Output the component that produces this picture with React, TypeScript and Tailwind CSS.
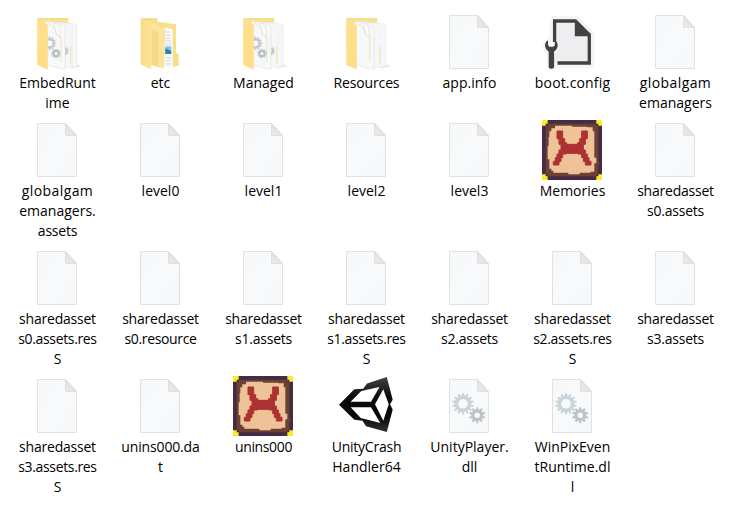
type Kind = "gearFolder" | "pageFolder" | "docFolder" | "file" | "config" | "game" | "unity" | "dll";

interface Item {
  kind: Kind;
  lines: string[];
}

const rows: { height: string; items: Item[] }[] = [
  {
    height: "h-[108px]",
    items: [
      { kind: "gearFolder", lines: ["EmbedRunt", "ime"] },
      { kind: "docFolder", lines: ["etc"] },
      { kind: "gearFolder", lines: ["Managed"] },
      { kind: "pageFolder", lines: ["Resources"] },
      { kind: "file", lines: ["app.info"] },
      { kind: "config", lines: ["boot.config"] },
      { kind: "file", lines: ["globalgam", "emanagers"] },
    ],
  },
  {
    height: "h-32",
    items: [
      { kind: "file", lines: ["globalgam", "emanagers.", "assets"] },
      { kind: "file", lines: ["level0"] },
      { kind: "file", lines: ["level1"] },
      { kind: "file", lines: ["level2"] },
      { kind: "file", lines: ["level3"] },
      { kind: "game", lines: ["Memories"] },
      { kind: "file", lines: ["sharedasset", "s0.assets"] },
    ],
  },
  {
    height: "h-32",
    items: [
      { kind: "file", lines: ["sharedasset", "s0.assets.res", "S"] },
      { kind: "file", lines: ["sharedasset", "s0.resource"] },
      { kind: "file", lines: ["sharedasset", "s1.assets"] },
      { kind: "file", lines: ["sharedasset", "s1.assets.res", "S"] },
      { kind: "file", lines: ["sharedasset", "s2.assets"] },
      { kind: "file", lines: ["sharedasset", "s2.assets.res", "S"] },
      { kind: "file", lines: ["sharedasset", "s3.assets"] },
    ],
  },
  {
    height: "h-32",
    items: [
      { kind: "file", lines: ["sharedasset", "s3.assets.res", "S"] },
      { kind: "file", lines: ["unins000.da", "t"] },
      { kind: "game", lines: ["unins000"] },
      { kind: "unity", lines: ["UnityCrash", "Handler64"] },
      { kind: "dll", lines: ["UnityPlayer.", "dll"] },
      { kind: "dll", lines: ["WinPixEven", "tRuntime.dl", "l"] },
    ],
  },
];

// Letter spacing for the label lines that need to run tighter or wider.
function tracking(line: string) {
  if (line === "globalgam") return "tracking-[0.4px]";
  if (line === "boot.config") return "tracking-[0.15px]";
  if (line === "s0.resource" || line.endsWith("assets.res")) return "tracking-[-0.35px]";
  if (line === "unins000") return "tracking-[-0.35px]";
  if (line.endsWith("assets") || line === "sharedasset" || line === "UnityCrash") return "tracking-[-0.22px]";
  if (line === "unins000.da" || line === "Resources") return "tracking-[-0.15px]";
  return "";
}

function gearPath(cx: number, cy: number, outer: number, root: number, hole: number, teeth: number) {
  const pts: string[] = [];
  const step = (Math.PI * 2) / teeth;
  for (let i = 0; i < teeth; i++) {
    const a = i * step - Math.PI / 2;
    const corners: [number, number][] = [
      [-0.3, root],
      [-0.2, outer],
      [0.2, outer],
      [0.3, root],
    ];
    for (const [t, r] of corners) {
      pts.push(`${(cx + r * Math.cos(a + t * step)).toFixed(2)} ${(cy + r * Math.sin(a + t * step)).toFixed(2)}`);
    }
  }
  return `M${pts.join("L")}ZM${cx - hole} ${cy}a${hole} ${hole} 0 1 0 ${hole * 2} 0a${hole} ${hole} 0 1 0 ${-hole * 2} 0Z`;
}

function FileIcon({ gears = false }: { gears?: boolean }) {
  return (
    <svg viewBox="0 0 60 60" className="h-[60px] w-[60px]">
      <path d="M10.5 3.5H38.5L49.5 15.5V56.5H10.5Z" fill="url(#paper)" stroke="#dfe1e2" />
      <path d="M38.5 3.5V15.5H49.5Z" fill="url(#fold)" stroke="#d9dbdc" strokeWidth=".8" />
      {gears && (
        <>
          <path d={gearPath(24, 27.8, 10.7, 8.4, 4.8, 14)} fill="#cbd4da" fillRule="evenodd" />
          <path d={gearPath(38.2, 39.2, 8.1, 6, 2.7, 10)} fill="#bac4ca" fillRule="evenodd" />
        </>
      )}
    </svg>
  );
}

function FolderIcon({ gears = false }: { gears?: boolean }) {
  return (
    <svg viewBox="0 0 60 60" className="h-[60px] w-[60px]">
      <path d="M43 57L54.5 54.2L50 52Z" fill="#e8e8e8" />
      <path d="M10.5 6.2H41.3V50H10.5Z" fill="#f9e294" />
      <path d="M10.5 6.2H41.3V7.5H13Z" fill="#f5da84" />
      <path d="M26 9.7L38 11L49.8 12.3V54.5L34 56Z" fill="#f6f7f8" stroke="#e4e5e6" strokeWidth=".6" />
      <path d="M40 11.2L45 16V54" fill="none" stroke="#e9eaeb" strokeWidth=".5" />
      <path d="M43.7 34V51" stroke="#f5dea2" strokeWidth="1" />
      {gears && <path d={gearPath(37.5, 39, 4.6, 3.4, 1.3, 9)} fill="#bcc5cb" fillRule="evenodd" />}
      <path d="M18.5 9.2L31 11.2L38 14.5V57.6L20 53Z" fill="#f7f8fa" stroke="#e0e1e2" strokeWidth=".6" />
      <path d="M29.5 11L33.7 25L29 22.5Z" fill="#e5e6e7" />
      <path d="M27 11L32 13L33.8 25.5L29.5 22.5Z" fill="#fbfbfb" stroke="#d5d6d7" strokeWidth=".5" />
      <path d="M21 11.5Q28 13 29.5 22.5L33.8 25.4V50" fill="none" stroke="#f1dda5" strokeWidth=".8" />
      {gears && (
        <>
          <path d={gearPath(22.5, 31.3, 6.8, 5.4, 2.9, 12)} fill="#c3cbd1" fillRule="evenodd" />
          <path d={gearPath(29, 41.5, 4.9, 3.7, 1.6, 10)} fill="#b5bfc5" fillRule="evenodd" />
        </>
      )}
      <path d="M10.3 6.3L20.8 13V57.4L10.3 53Z" fill="url(#folder)" />
    </svg>
  );
}

function DocFolderIcon() {
  return (
    <svg viewBox="0 0 60 60" className="h-[60px] w-[60px]">
      <path d="M10.7 6.3H27.3V9.7L46 12.2V40.7L48.7 42V53.5L42 55.5L20 52Z" fill="#f8df8c" />
      <path d="M13.5 7.2H26.5V10" fill="none" stroke="#eecd70" strokeWidth=".7" />
      <path d="M33.8 15.5L42.7 17V56.3L33.8 54.7Z" fill="#f8f9fa" />
      <path d="M35.5 20H40M35.5 23H41M35.5 26H40M35.5 29H41M35.5 32H41M35.5 46H41M35.5 49H40M35.5 52H41" stroke="#c7cfd5" strokeWidth=".8" />
      <path d="M35.3 34.3H41.2V42H35.3Z" fill="#79c8ef" />
      <path d="M35.3 36.3L41.2 39V42H35.3Z" fill="#377bab" />
      <path d="M15.5 8.3L35.5 17L34 56.8L20.5 53Z" fill="#fbe59a" />
      <path d="M22 17L28.5 20V55L21.5 53Z" fill="#eed078" opacity=".5" />
      <path d="M10.7 6.3L22 13L21.3 57.3L10.7 52.6Z" fill="url(#folder2)" />
    </svg>
  );
}

function ConfigIcon() {
  return (
    <svg viewBox="0 0 60 60" className="h-[60px] w-[60px]">
      <path d="M12.3 8.3H34L48 22.3V51.5H12.3Z" fill="#f5f5f5" stroke="#f5f5f5" strokeWidth="9" strokeLinejoin="round" />
      <circle cx="9.4" cy="34.5" r="8.7" fill="#f5f5f5" />
      <path d="M9.4 35V54.5" stroke="#f5f5f5" strokeWidth="9" strokeLinecap="round" />
      <path d="M12.3 8.3H34L47.3 22.3V50.7H12.3Z" fill="#eeeef0" />
      <circle cx="9.4" cy="34.5" r="8" fill="#f5f5f5" />
      <path d="M12.6 30V9H33.5L47.3 22.6V51H15.5" fill="none" stroke="#424242" strokeWidth="3.3" />
      <path d="M32.8 8V24.3H48.7Z" fill="#424242" />
      <path d="M6 28.2C3.8 29.4 2.8 31.6 3.1 34C3.4 36.4 4.8 38.4 6.7 39.5V54.5Q6.7 56.7 9.4 56.7Q12.1 56.7 12.1 54.5V39.5C14 38.4 15.4 36.4 15.7 34C16 31.6 15 29.4 12.8 28.2V33.2L11.3 34.7H7.5L6 33.2Z" fill="#424242" />
    </svg>
  );
}

function GameIcon() {
  return (
    <svg viewBox="0 0 180 180" className="h-[60px] w-[60px]">
      <path d="M0 0H180V180H0Z" fill="#452b45" />
      <path d="M17 11H163V17H169V124H172V136H169V163H163V169H17V163H11V17H17Z" fill="#6b4035" />
      <path d="M39 17H90V20H136V22H152V34H157V113H163V130H157V155H146V158H113V163H79V158H34V152H28V146H22V118H17V79H20V51H22V34H28V25H39Z" fill="#efc297" />
      <path
        d="M45 33H62V56H68V68H74V73H107V68H113V56H119V33H136V56H130V73H124V90H130V102H136V113H141V124H147V135H130V124H124V113H119V102H108V100H73V102H62V113H57V124H51V135H34V124H40V113H45V102H51V90H57V73H51V56H45Z"
        fill="#ad3132"
        stroke="#ad3132"
        strokeWidth="3"
      />
      <path d="M0 0H17V11H11V17H0ZM163 0H180V17H169V11H163ZM0 163H11V169H17V180H0ZM169 163H180V180H163V169H169Z" fill="#fbed29" />
    </svg>
  );
}

function UnityIcon() {
  return (
    <svg viewBox="0 0 60 60" className="h-[60px] w-[60px]">
      <path d="M3 28.7L18.3 13.3L27.3 12.7L31 7.5L50.8 1L56.7 23.7L54 28.3L56.7 33.5L50.8 56L30 50.3L26.5 44.7L18.3 43.8Z" fill="url(#unity)" />
      <path d="M14.6 25.8L25 15.2L32 13.4L43.5 11L35 25.8Z" fill="#fff" />
      <path d="M14.6 31.3H35L44.3 47L31.7 43.8L24.7 42Z" fill="#fff" />
      <path d="M47.3 13.3L52.7 28.3L47.3 44.8L39 28.3Z" fill="#fff" />
    </svg>
  );
}

function Icon({ kind }: { kind: Kind }) {
  switch (kind) {
    case "gearFolder":
      return <FolderIcon gears />;
    case "pageFolder":
      return <FolderIcon />;
    case "docFolder":
      return <DocFolderIcon />;
    case "config":
      return <ConfigIcon />;
    case "game":
      return <GameIcon />;
    case "unity":
      return <UnityIcon />;
    case "dll":
      return <FileIcon gears />;
    default:
      return <FileIcon />;
  }
}

function Gradients() {
  return (
    <svg className="block h-0 w-0">
      <defs>
        <linearGradient id="paper" x1="0" y1="0" x2="1" y2="1">
          <stop offset="0" stopColor="#f6f7f8" />
          <stop offset=".5" stopColor="#f8fafb" />
          <stop offset="1" stopColor="#f5f7f8" />
        </linearGradient>
        <linearGradient id="fold" x1="0" y1="1" x2="1" y2="0">
          <stop offset="0" stopColor="#ececed" />
          <stop offset=".5" stopColor="#e2e3e4" />
          <stop offset="1" stopColor="#d8d8d8" />
        </linearGradient>
        <linearGradient id="folder" x1="0" y1="0" x2="0" y2="1">
          <stop offset="0" stopColor="#fde08e" />
          <stop offset="1" stopColor="#ffdd86" />
        </linearGradient>
        <linearGradient id="folder2" x1="0" y1="0" x2="1" y2="0">
          <stop offset="0" stopColor="#f8dc84" />
          <stop offset="1" stopColor="#fde596" />
        </linearGradient>
        <linearGradient id="unity" x1="0" y1="0" x2="0" y2="1">
          <stop offset="0" stopColor="#444" />
          <stop offset=".35" stopColor="#0c0c0c" />
          <stop offset=".7" stopColor="#060606" />
          <stop offset="1" stopColor="#333" />
        </linearGradient>
      </defs>
    </svg>
  );
}

export default function App() {
  return (
    <main className="h-[505px] w-[729px] overflow-hidden bg-white pt-3 pl-[15px] font-['Open_Sans','Noto_Sans',sans-serif] text-[14px] leading-5 text-black">
      <Gradients />
      {rows.map((row, r) => (
        <div key={r} className={`flex gap-[19px] ${row.height}`}>
          {row.items.map((item, i) => (
            <div key={i} className="flex w-[84px] shrink-0 flex-col items-center">
              <Icon kind={item.kind} />
              <div className="mt-px flex flex-col items-center pl-px whitespace-nowrap">
                {item.lines.map((line) => (
                  <span key={line} className={tracking(line)}>
                    {line}
                  </span>
                ))}
              </div>
            </div>
          ))}
        </div>
      ))}
    </main>
  );
}
